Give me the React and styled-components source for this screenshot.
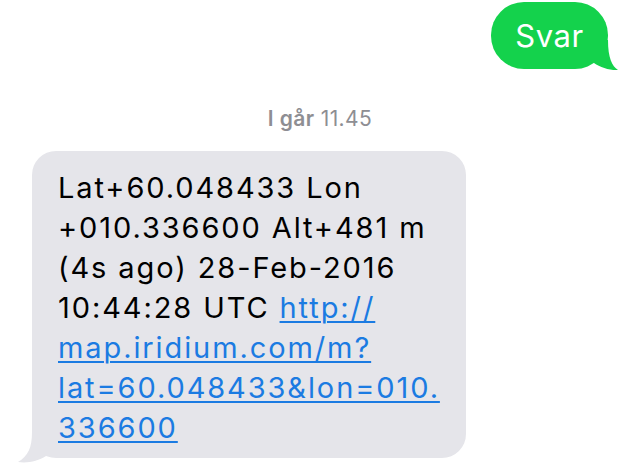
import React from "react";
import styled, { createGlobalStyle } from "styled-components";

const Global = createGlobalStyle`
  html, body { margin: 0; padding: 0; background: #ffffff; }
  body { font-family: Inter, "Noto Sans", "Liberation Sans", sans-serif; }
`;

const Screen = styled.div`
  width: 640px;
  height: 470px;
  overflow: hidden;
  display: flex;
  flex-direction: column;
  background: #ffffff;
`;

const OutRow = styled.div`
  display: flex;
  justify-content: flex-end;
  padding: 2px 32px 0 0;
`;

const Bubble = styled.div`
  position: relative;
  border-radius: ${(p) => p.$radius}px;
  background: ${(p) => p.$bg};
  color: ${(p) => p.$fg};
`;

const OutBubble = styled(Bubble)`
  height: 67px;
  width: 117px;
  display: flex;
  align-items: center;
  justify-content: center;
  font-size: 31px;
  letter-spacing: 0.6px;
`;

const BubbleText = styled.span`
  position: relative;
  z-index: 1;
`;

const Stamp = styled.div`
  margin-top: 38px;
  text-align: center;
  font-size: 21px;
  color: #8e8e93;
  line-height: 24px;
  letter-spacing: 0.4px;
  b { font-weight: 600; }
`;

const InRow = styled.div`
  display: flex;
  justify-content: flex-start;
  padding: 20px 0 0 32px;
`;

const InBubble = styled(Bubble)`
  width: 434px;
  box-sizing: border-box;
  padding: 17px 0 10px 26px;
  font-size: 29px;
  line-height: 40px;
  letter-spacing: 1.9px;
  white-space: nowrap;
`;

const Link = styled.a`
  color: #1b7be2;
  text-decoration: underline;
  text-decoration-thickness: 2px;
  text-underline-offset: 3px;
`;

const Tail = styled.svg`
  position: absolute;
  bottom: ${(p) => p.$bottom}px;
  ${(p) => (p.$side === "right" ? `right: ${p.$off}px;` : `left: ${p.$off}px;`)}
  width: ${(p) => p.$w}px;
  height: ${(p) => p.$h}px;
  overflow: visible;
`;

function RightTail({ color }) {
  return (
    <Tail $side="right" $off={-12} $bottom={-2} $w={30} $h={34} viewBox="0 0 30 34">
      <path
        d="M18 3 C18 21 22 29 28 33 C20 33.5 10 30.5 4 26 L4 3 Z"
        fill={color}
      />
    </Tail>
  );
}

function LeftTail({ color }) {
  return (
    <Tail $side="left" $off={-14} $bottom={-5} $w={32} $h={34} viewBox="0 0 32 34">
      <path
        d="M14 3 C14 19 10 27 0 33 C10 34.5 20 32 28 27 L28 3 Z"
        fill={color}
      />
    </Tail>
  );
}

export default function App() {
  return (
    <>
      <Global />
      <Screen>
        <OutRow>
          <OutBubble $bg="#14d24c" $fg="#ffffff" $radius={33}>
            <BubbleText>Svar</BubbleText>
            <RightTail color="#14d24c" />
          </OutBubble>
        </OutRow>
        <Stamp>
          <b>I går</b> 11.45
        </Stamp>
        <InRow>
          <InBubble $bg="#e5e5ea" $fg="#000000" $radius={24}>
            Lat+60.048433 Lon
            <br />
            +010.336600 Alt+481 m
            <br />
            (4s ago) 28-Feb-2016
            <br />
            10:44:28 UTC{" "}
            <Link href="#">
              http://
              <br />
              map.iridium.com/m?
              <br />
              lat=60.048433&amp;lon=010.
              <br />
              336600
            </Link>
            <LeftTail color="#e5e5ea" />
          </InBubble>
        </InRow>
      </Screen>
    </>
  );
}
